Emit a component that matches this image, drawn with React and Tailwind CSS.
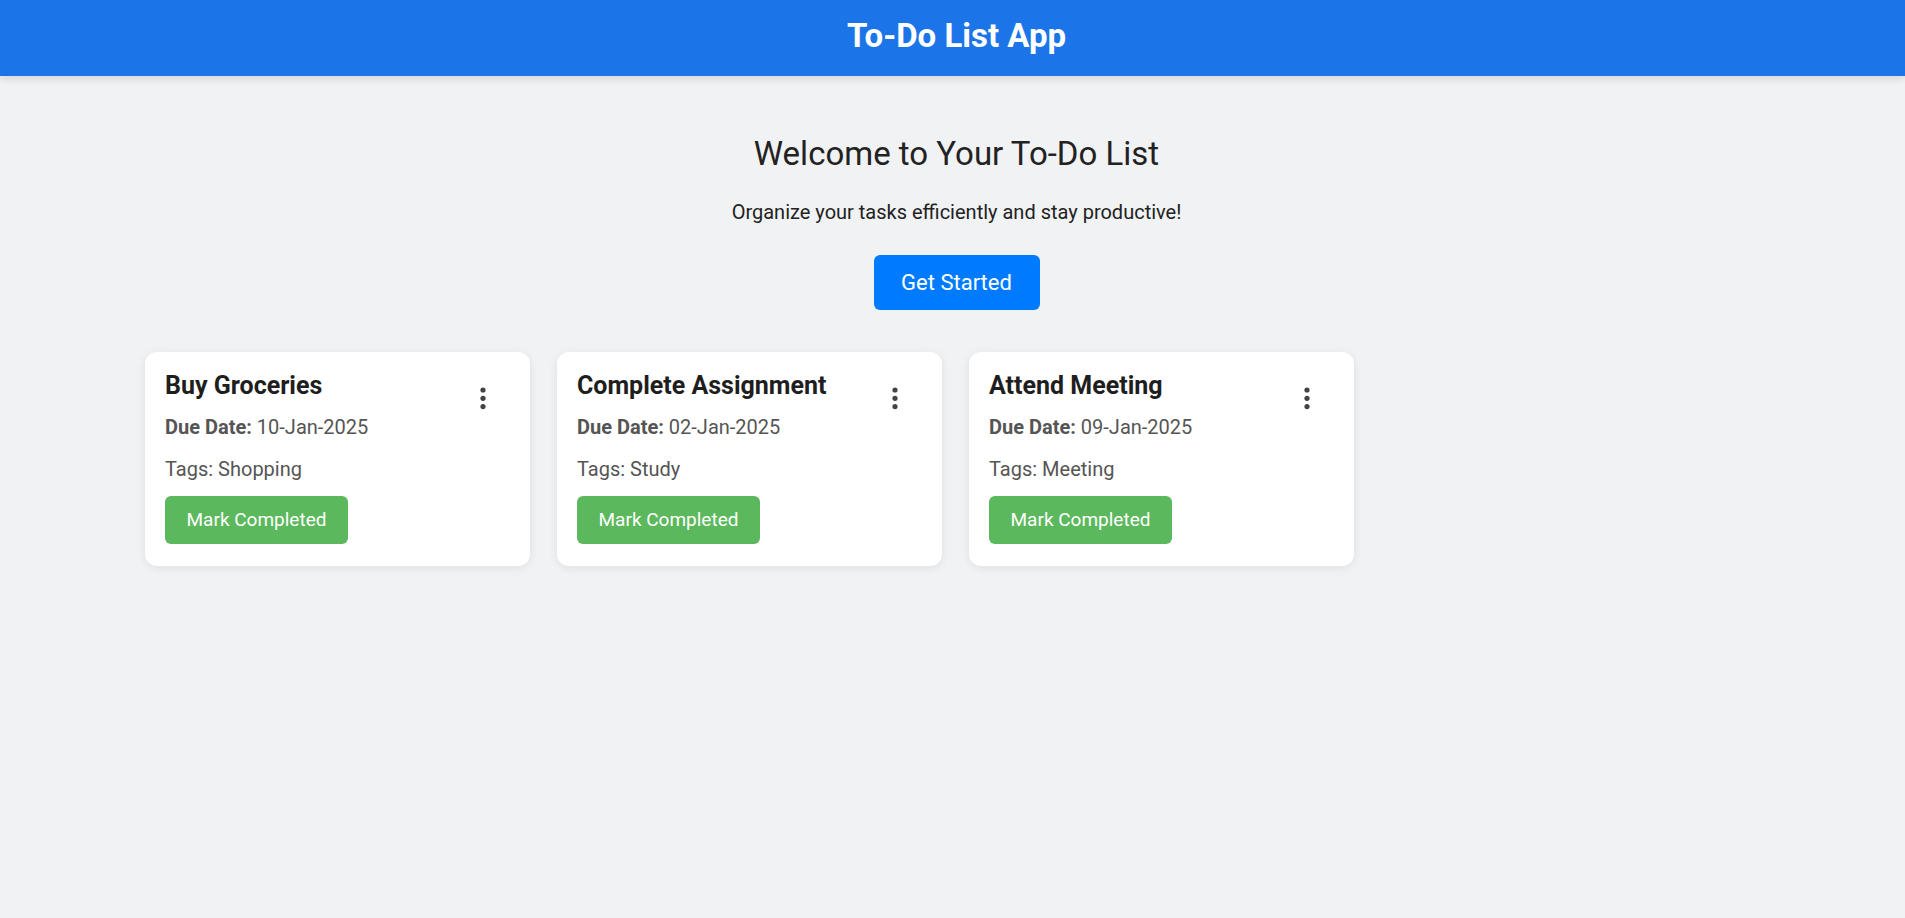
const tasks = [
  { id: 1, title: "Buy Groceries", due: "10-Jan-2025", tags: "Shopping" },
  { id: 2, title: "Complete Assignment", due: "02-Jan-2025", tags: "Study" },
  { id: 3, title: "Attend Meeting", due: "09-Jan-2025", tags: "Meeting" },
];

function KebabIcon() {
  return (
    <svg width="6" height="24" viewBox="0 0 6 24" className="fill-[#444]">
      <circle cx="3" cy="4" r="2.6" />
      <circle cx="3" cy="12.3" r="2.6" />
      <circle cx="3" cy="20.6" r="2.6" />
    </svg>
  );
}

function TaskCard({ task }) {
  return (
    <div className="w-[385px] bg-white rounded-xl shadow-[0_2px_10px_rgba(0,0,0,0.08)] px-5 pt-[19px] pb-[22px]">
      <div className="flex items-start justify-between h-[30px]">
        <h3 className="text-[25px] font-bold text-[#1e1e1e] leading-[30px]">
          {task.title}
        </h3>
        <button className="mt-[15px] mr-[24px] flex items-center justify-center">
          <KebabIcon />
        </button>
      </div>
      <p className="mt-[14px] text-[20px] text-[#555] leading-[24px]">
        <span className="font-bold">Due Date:</span> {task.due}
      </p>
      <p className="mt-[18px] text-[20px] text-[#555] leading-[24px]">
        Tags: {task.tags}
      </p>
      <button className="mt-[15px] h-[48px] w-[183px] rounded-[6px] bg-[#5cb85c] text-white text-[19px]">
        Mark Completed
      </button>
    </div>
  );
}

export default function App() {
  return (
    <div
      className="min-h-screen bg-[#f1f2f4]"
      style={{ fontFamily: "Roboto, 'Liberation Sans', sans-serif" }}
    >
      {/* Header */}
      <header className="h-[76px] bg-[#1c75e8] flex justify-center pt-[16px] pl-[8px] shadow-[0_3px_8px_rgba(0,0,0,0.12)]">
        <h1 className="text-[33px] font-bold text-white leading-[40px]">
          To-Do List App
        </h1>
      </header>

      {/* Hero */}
      <div className="flex flex-col items-center pt-[58px] pl-[8px]">
        <h2 className="text-[33px] text-[#222] leading-[40px]">
          Welcome to Your To-Do List
        </h2>
        <p className="mt-[23px] text-[20px] text-[#222] leading-[30px]">
          Organize your tasks efficiently and stay productive!
        </p>
        <button className="mt-[28px] h-[55px] w-[166px] rounded-[6px] bg-[#007bff] text-white text-[22px]">
          Get Started
        </button>
      </div>

      {/* Cards */}
      <div className="flex gap-[27px] pl-[145px] pt-[42px]">
        {tasks.map((task) => (
          <TaskCard key={task.id} task={task} />
        ))}
      </div>
    </div>
  );
}
